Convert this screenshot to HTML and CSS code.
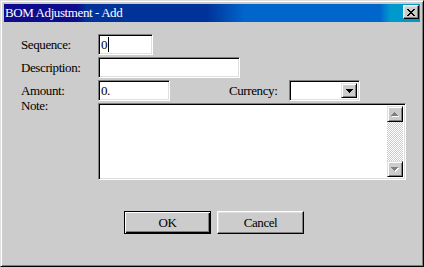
FILE: index.html
```html
<!DOCTYPE html>
<html>
<head>
<meta charset="utf-8">
<link rel="stylesheet" href="styles.css">
</head>
<body>
<div class="window">
  <div class="titlebar">
    <span class="title">BOM Adjustment - Add</span>
    <span class="close">
      <svg width="8" height="7" viewBox="0 0 8 7"><path d="M0 0h2v1h-2zM6 0h2v1h-2zM1 1h2v1h-2zM5 1h2v1h-2zM2 2h4v1h-4zM3 3h2v1h-2zM2 4h4v1h-4zM1 5h2v1h-2zM5 5h2v1h-2zM0 6h2v1h-2zM6 6h2v1h-2z" fill="#000"/></svg>
    </span>
  </div>
  <div class="content">
    <div class="row">
      <span class="label">Sequence:</span>
      <div class="field seq">0<span class="caret"></span></div>
    </div>
    <div class="row">
      <span class="label">Description:</span>
      <div class="field desc"></div>
    </div>
    <div class="row">
      <span class="label">Amount:</span>
      <div class="field amt">0.</div>
      <span class="label cur">Currency:</span>
      <div class="field combo">
        <span class="dd">
          <svg width="7" height="4" viewBox="0 0 7 4"><path d="M0 0h7v1h-7zM1 1h5v1h-5zM2 2h3v1h-3zM3 3h1v1h-1z" fill="#000"/></svg>
        </span>
      </div>
    </div>
    <div class="row note">
      <span class="label notelabel">Note:</span>
      <div class="field memo">
        <div class="vscroll">
          <span class="sbtn">
            <svg width="8" height="5" viewBox="0 0 8 5"><path d="M4 1h1v1h-1zM3 2h3v1h-3zM2 3h5v1h-5zM1 4h7v1h-7z" fill="#fff"/><path d="M3 0h1v1h-1zM2 1h3v1h-3zM1 2h5v1h-5zM0 3h7v1h-7z" fill="#808080"/></svg>
          </span>
          <span class="track"></span>
          <span class="sbtn">
            <svg width="8" height="5" viewBox="0 0 8 5"><path d="M1 1h7v1h-7zM2 2h5v1h-5zM3 3h3v1h-3zM4 4h1v1h-1z" fill="#fff"/><path d="M0 0h7v1h-7zM1 1h5v1h-5zM2 2h3v1h-3zM3 3h1v1h-1z" fill="#808080"/></svg>
          </span>
        </div>
      </div>
    </div>
    <div class="buttons">
      <button class="btn default">OK</button>
      <button class="btn">Cancel</button>
    </div>
  </div>
</div>
</body>
</html>
```
FILE: styles.css
```css
* { box-sizing: border-box; }
html, body { margin: 0; padding: 0; }
body {
  width: 424px;
  height: 267px;
  overflow: hidden;
  background: #cccccc;
  font-family: "Liberation Serif", "Times New Roman", serif;
  font-size: 13px;
  letter-spacing: -0.4px;
  color: #000;
}
.window {
  width: 424px;
  height: 267px;
  background: #cccccc;
  border: 1px solid;
  border-color: #dfdfdf #000 #000 #dfdfdf;
  box-shadow: inset 1px 1px #fff, inset -1px -1px #808080;
  padding: 3px;
  display: flex;
  flex-direction: column;
}
.titlebar {
  height: 18px;
  display: flex;
  align-items: center;
  justify-content: space-between;
  padding: 0 1px 0 1px;
  background: linear-gradient(to right,
    #0c0c8c 0, #0c0c8c 73px,
    #003399 83px, #003399 203px,
    #0066cc 241px, #0066cc 376px,
    #0099cc 386px, #0099cc 100%);
  color: #fff;
}
.title {
  line-height: 18px;
  white-space: nowrap;
}
.close {
  width: 16px;
  height: 14px;
  margin-top: -2px;
  background: #cccccc;
  border: 1px solid;
  border-color: #fff #000 #000 #fff;
  box-shadow: inset -1px -1px #808080, inset 1px 1px #dfdfdf;
  display: flex;
  align-items: center;
  justify-content: center;
}
.close svg { display: block; }
.content {
  padding: 12px 0 0 17px;
  display: flex;
  flex-direction: column;
  gap: 2px;
}
.row {
  display: flex;
  align-items: center;
  height: 21px;
}
.label {
  width: 77px;
  line-height: 21px;
  white-space: nowrap;
}
.field {
  height: 21px;
  background: #fff;
  border: 1px solid;
  border-color: #808080 #fff #fff #808080;
  box-shadow: inset 1px 1px #000, inset -1px -1px #dfdfdf;
  padding-left: 2px;
  line-height: 19px;
  display: flex;
  align-items: center;
}
.seq { width: 55px; }
.desc { width: 142px; }
.amt { width: 72px; }
.caret {
  display: inline-block;
  width: 1px;
  height: 15px;
  background: #000;
  margin-left: 1px;
}
.cur {
  width: 60px;
  margin-left: 59px;
}
.combo {
  width: 71px;
  padding: 2px;
  justify-content: flex-end;
  align-items: stretch;
}
.dd {
  width: 16px;
  background: #cccccc;
  border: 1px solid;
  border-color: #dfdfdf #000 #000 #dfdfdf;
  box-shadow: inset 1px 1px #fff, inset -1px -1px #808080;
  display: flex;
  align-items: center;
  justify-content: center;
}
.dd svg { display: block; }
.note {
  height: 77px;
  align-items: flex-start;
}
.notelabel {
  line-height: 12px;
  margin-top: -3px;
}
.memo {
  width: 308px;
  height: 77px;
  padding: 2px;
  justify-content: flex-end;
  align-items: stretch;
}
.vscroll {
  width: 16px;
  display: flex;
  flex-direction: column;
}
.sbtn {
  height: 16px;
  background: #cccccc;
  border: 1px solid;
  border-color: #dfdfdf #000 #000 #dfdfdf;
  box-shadow: inset 1px 1px #fff, inset -1px -1px #808080;
  display: flex;
  align-items: center;
  justify-content: center;
}
.sbtn svg { display: block; }
.track {
  flex: 1;
  background-color: #cccccc;
  background-image: conic-gradient(#fff 25%, #cccccc 0 50%, #fff 0 75%, #cccccc 0);
  background-size: 2px 2px;
}
.buttons {
  display: flex;
  gap: 6px;
  margin-top: 29px;
  padding-left: 103px;
}
.btn {
  width: 87px;
  height: 23px;
  padding: 0;
  background: #cccccc;
  font-family: inherit;
  font-size: 13px;
  letter-spacing: -0.4px;
  color: #000;
  border: 1px solid;
  border-color: #fff #000 #000 #fff;
  box-shadow: inset -1px -1px #808080, inset 1px 1px #dfdfdf;
}
.btn.default {
  border-color: #000;
  box-shadow: inset 1px 1px #fff, inset -1px -1px #000, inset -2px -2px #808080;
}
```
